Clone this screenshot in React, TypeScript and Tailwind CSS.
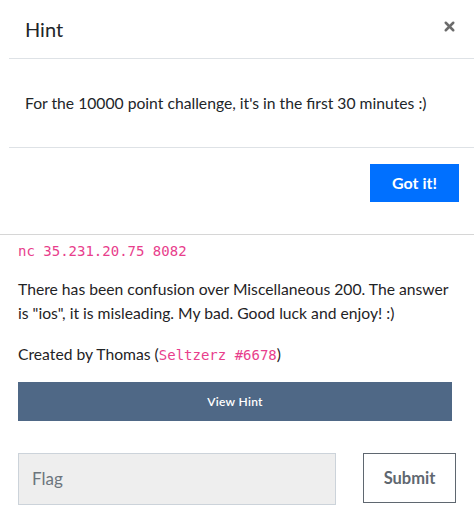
import { X } from "lucide-react";

const HintModal = () => {
    return (
        <div className="ml-[9px] bg-white">
            <div className="flex h-[59px] items-center justify-between pl-4 pr-4 border-b border-[#dee2e6]">
                <h5 className="text-[20px] leading-[30px] text-[#212529]">Hint</h5>
                <X className="h-[15px] w-[15px] text-[#6c6c6c] -mt-[5px] mr-[1px]" strokeWidth={4} />
            </div>
            <div className="flex h-[89px] items-center px-4 border-b border-[#dee2e6]">
                <p className="text-[15.7px] leading-6 text-[#212529]">
                    For the 10000 point challenge, it's in the first 30 minutes :)
                </p>
            </div>
            <div className="flex h-[86px] justify-end pt-4 pr-[15px]">
                <button className="h-[38px] w-[89px] bg-[#0070ff] text-[16px] font-bold text-white">
                    Got it!
                </button>
            </div>
        </div>
    );
};

export default function App() {
    return (
        <div
            className="w-[474px] h-[529px] overflow-hidden bg-white"
            style={{ fontFamily: "Lato, 'Open Sans', sans-serif" }}
        >
            <HintModal />
            <div className="border-t border-[#d6d6d6] px-[18px] pt-[6px]">
                <code className="block text-[14px] leading-[21px] text-[#e83e8c]" style={{ fontFamily: "'DejaVu Sans Mono', monospace" }}>
                    nc 35.231.20.75 8082
                </code>
                <p className="mt-[15px] text-[15.7px] leading-6 text-[#1f2326]">
                    There has been confusion over Miscellaneous 200. The answer is "ios", it is misleading. My bad. Good luck and enjoy! :)
                </p>
                <p className="mt-[17px] text-[15.7px] leading-6 text-[#1f2326]">
                    Created by Thomas (
                    <code className="text-[14px] text-[#e83e8c]" style={{ fontFamily: "'DejaVu Sans Mono', monospace" }}>
                        Seltzerz #6678
                    </code>
                    )
                </p>
                <button className="mt-[15px] flex h-[39px] w-[434px] items-center justify-center bg-[#4f6886] text-[12px] font-semibold tracking-[0.3px] text-white">
                    View Hint
                </button>
                <div className="mt-8 flex items-start justify-between">
                    <div className="flex h-[52px] w-[318px] items-center border border-[#ccd3da] bg-[#eeeeee] px-[13px] text-[17px] text-[#6c757d]">
                        Flag
                    </div>
                    <button className="h-[50px] w-[93px] border border-[#5f6770] bg-white text-[16.5px] font-bold text-[#5f6770]">
                        Submit
                    </button>
                </div>
            </div>
        </div>
    );
}
